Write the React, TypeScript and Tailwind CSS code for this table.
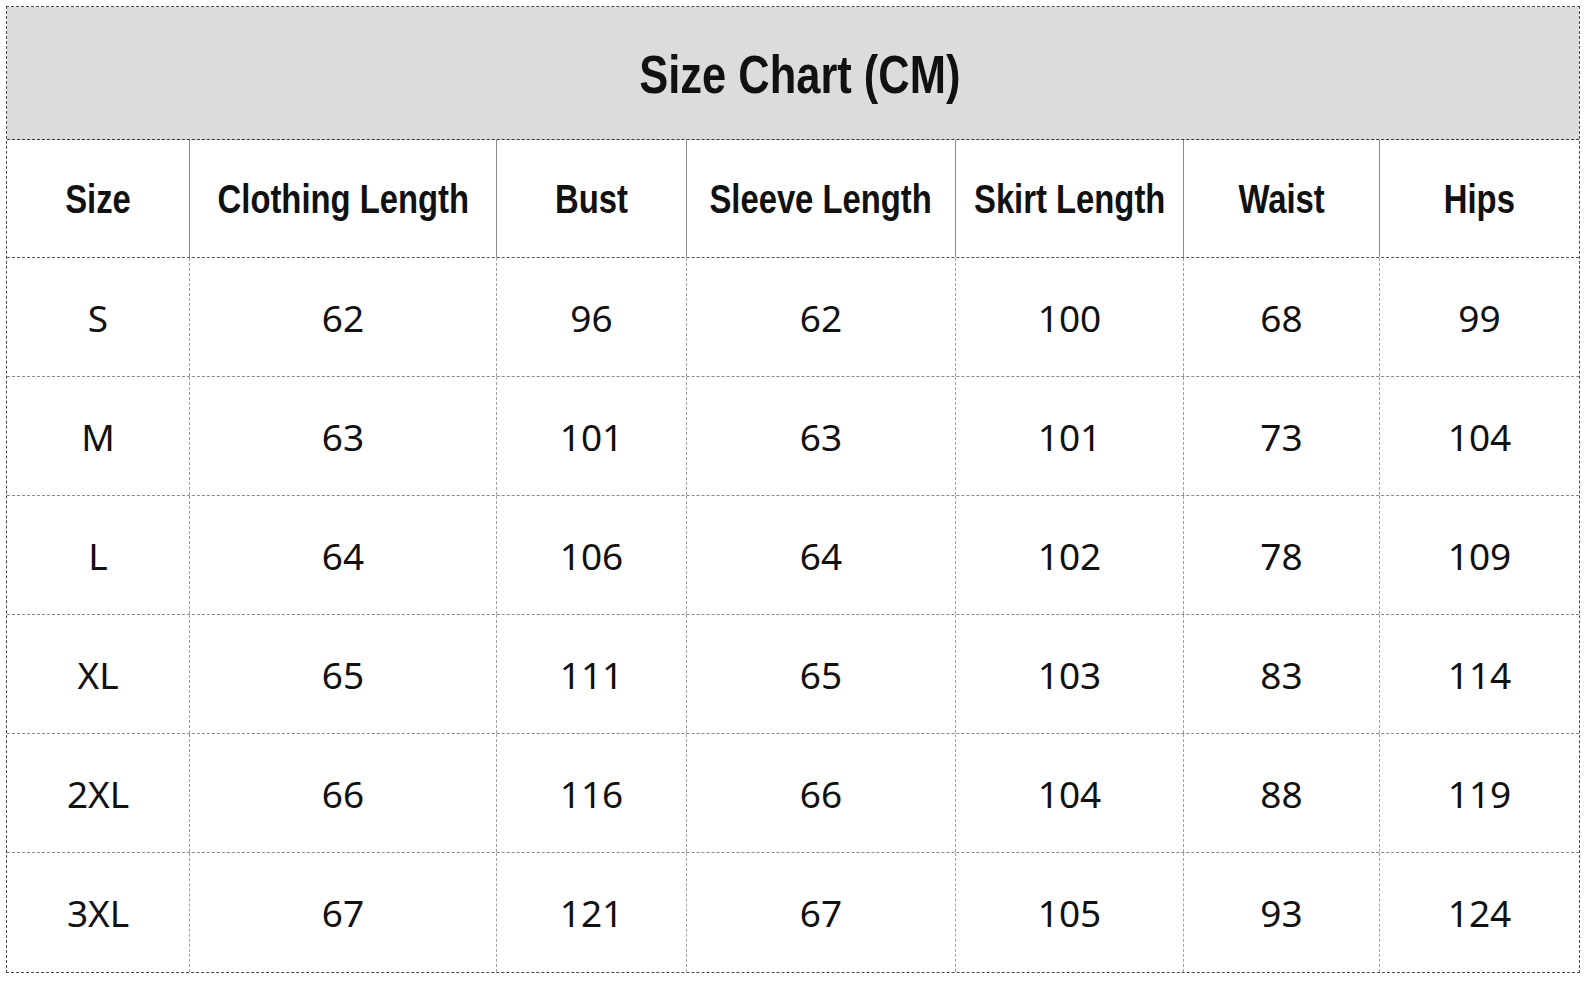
import React from 'react';

const headers = ['Size', 'Clothing Length', 'Bust', 'Sleeve Length', 'Skirt Length', 'Waist', 'Hips'];

const rows = [
  ['S', '62', '96', '62', '100', '68', '99'],
  ['M', '63', '101', '63', '101', '73', '104'],
  ['L', '64', '106', '64', '102', '78', '109'],
  ['XL', '65', '111', '65', '103', '83', '114'],
  ['2XL', '66', '116', '66', '104', '88', '119'],
  ['3XL', '67', '121', '67', '105', '93', '124'],
];

const cols = 'grid grid-cols-[183px_307px_190px_269px_228px_196px_199px]';

// no narrow font installed, so squeeze Liberation Sans bold to Arial Narrow width
const Narrow = ({ children }: { children: React.ReactNode }) => (
  <span className="inline-block whitespace-nowrap scale-x-[0.82] font-bold font-['Liberation_Sans',Arial,sans-serif]">
    {children}
  </span>
);

const App = () => {
  return (
    <div className="w-[1596px] h-[985px] bg-white pt-[6px] pl-[6px]">
      <div className="w-[1574px] border border-dashed border-[#4a4a4a]">
        {/* title band */}
        <div className="h-[133px] bg-[#dcdcdc] border-b border-dashed border-[#3a3a3a] flex items-center justify-center pl-[14px]">
          <h1 className="text-[53px] text-[#111] leading-none">
            <Narrow>Size Chart (CM)</Narrow>
          </h1>
        </div>

        {/* header row */}
        <div className={`${cols} h-[118px] border-b border-dashed border-[#555]`}>
          {headers.map((h, i) => (
            <div
              key={h}
              className={
                'flex items-center justify-center text-[40px] text-[#111] leading-none ' +
                (i < headers.length - 1 ? 'border-r border-solid border-[#8c8c8c]' : '')
              }
            >
              <Narrow>{h}</Narrow>
            </div>
          ))}
        </div>

        {/* data rows */}
        {rows.map((r, ri) => (
          <div
            key={r[0]}
            className={`${cols} h-[119px] ${ri < rows.length - 1 ? 'border-b border-dashed border-[#8a8a8a]' : ''}`}
          >
            {r.map((v, i) => (
              <div
                key={i}
                className={
                  'flex items-center justify-center text-[37px] text-[#111] leading-none font-[Lato,\'Noto_Sans\',sans-serif] ' +
                  (i < r.length - 1 ? 'border-r border-dashed border-[#a0a0a0]' : '')
                }
              >
                {v}
              </div>
            ))}
          </div>
        ))}
      </div>
    </div>
  );
};

export default App;
